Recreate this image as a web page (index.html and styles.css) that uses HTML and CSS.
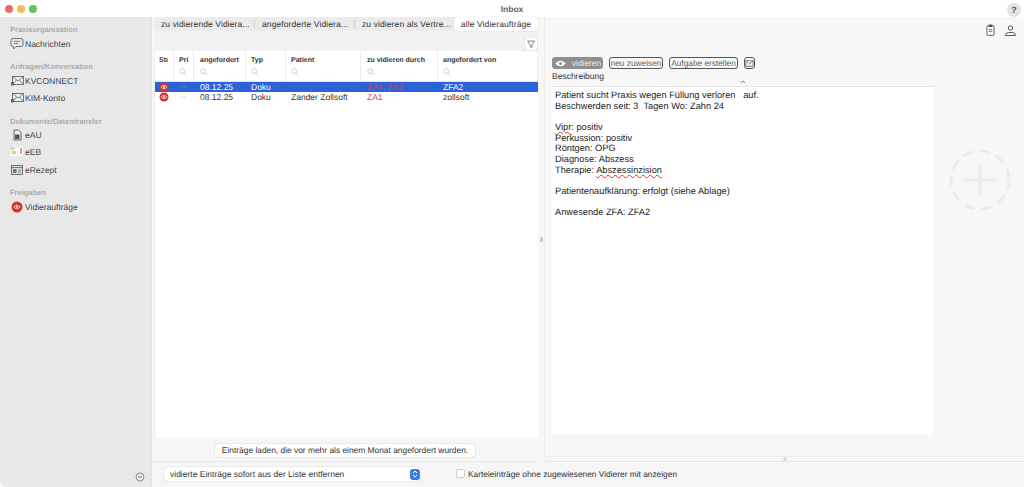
FILE: index.html
```html
<!DOCTYPE html>
<html lang="de">
<head>
<meta charset="utf-8">
<title>Inbox</title>
<link rel="stylesheet" href="styles.css">
</head>
<body>
<div class="window">
  <header class="titlebar">
    <div class="lights"><i class="light red"></i><i class="light yellow"></i><i class="light green"></i></div>
    <div class="title">Inbox</div>
    <div class="help">?</div>
  </header>
  <div class="body">
    <aside class="sidebar">
      <div class="group-title first">Praxisorganisation</div>
      <div class="nav-item"><svg class="nav-icon" viewBox="0 0 14 14"><path d="M3 1.500h8a2 2 0 0 1 2 2v4a2 2 0 0 1-2 2H6L3.500 12V9.500H3a2 2 0 0 1-2-2v-4a2 2 0 0 1 2-2z" fill="none" stroke="#666" stroke-width=".9"/><path d="M4 4.400h6M4 6.600h4" stroke="#666" stroke-width=".8"/></svg>Nachrichten</div>
      <div class="group-title">Anfragen/Konversation</div>
      <div class="nav-item"><svg class="nav-icon" viewBox="0 0 14 14"><rect x="2.500" y="2.500" width="11" height="8" fill="#eee" stroke="#666" stroke-width=".9"/><path d="M2.500 2.500l5.500 4.500 5.500-4.500M2.500 10.500l4-4.500M13.500 10.500l-4-4.500" fill="none" stroke="#666" stroke-width=".8"/><rect x="1" y="8" width="3" height="3.500" fill="#666"/></svg>KVCONNECT</div>
      <div class="nav-item"><svg class="nav-icon" viewBox="0 0 14 14"><rect x="2.500" y="2.500" width="11" height="8" fill="#eee" stroke="#666" stroke-width=".9"/><path d="M2.500 2.500l5.500 4.500 5.500-4.500M2.500 10.500l4-4.500M13.500 10.500l-4-4.500" fill="none" stroke="#666" stroke-width=".8"/><rect x="1" y="8" width="3" height="3.500" fill="#666"/></svg>KIM-Konto</div>
      <div class="group-title">Dokumente/Datentransfer</div>
      <div class="nav-item"><svg class="nav-icon" viewBox="0 0 14 14"><path d="M4 2h4.500L11 4.500V12H4z" fill="#eee" stroke="#555" stroke-width=".9"/><rect x="5" y="6.500" width="4.500" height="4.500" fill="#555"/></svg>eAU</div>
      <div class="nav-item"><svg class="nav-icon" viewBox="0 0 14 14"><rect x="1" y="2.500" width="12" height="9" fill="#f8f8f8"/><rect x="1" y="2.500" width="3" height="2" fill="#a9cda9"/><rect x="2" y="6" width="4" height="3" fill="#eccd77"/><rect x="10" y="3" width="2" height="6" fill="#cfa9a9"/></svg>eEB</div>
      <div class="nav-item"><svg class="nav-icon" viewBox="0 0 14 14"><rect x="1.500" y="2.500" width="11" height="9" fill="#ddd" stroke="#666" stroke-width=".9"/><path d="M1.500 4.500h11" stroke="#666" stroke-width=".8"/><rect x="3" y="6" width="3.500" height="4" fill="#777"/><path d="M8 7h3M8 9h3" stroke="#777" stroke-width=".8"/></svg>eRezept</div>
      <div class="group-title">Freigaben</div>
      <div class="nav-item"><svg class="nav-icon" viewBox="0 0 14 14"><circle cx="7" cy="7" r="5.500" fill="#d5322c"/><path d="M3.800 7q3.200-3.600 6.400 0q-3.200 3.600-6.400 0z" fill="none" stroke="#fff" stroke-width=".8"/><circle cx="7" cy="7" r="1" fill="#fff"/></svg>Vidieraufträge</div>
      <div class="sidebar-foot"><svg class="collapse" viewBox="0 0 10 10"><circle cx="5" cy="5" r="4" fill="none" stroke="#777" stroke-width=".8"/><path d="M3 5h4" stroke="#777" stroke-width=".8"/></svg></div>
    </aside>

    <main class="center">
      <nav class="tabs">
        <div class="tab">zu vidierende Vidiera...</div>
        <div class="tab sep">angeforderte Vidiera...</div>
        <div class="tab sep">zu vidieren als Vertre...</div>
        <div class="tab active">alle Vidieraufträge</div>
      </nav>
      <div class="filter-row">
        <div class="filter-btn"><svg viewBox="0 0 10 10" class="filter-icon"><path d="M1.500 2h7L6 5.500V8.500L4 7.500V5.500z" fill="none" stroke="#666" stroke-width=".8"/></svg></div>
      </div>
      <div class="table">
        <div class="row head">
          <div class="cell c1"><b>Stı</b></div>
          <div class="cell c2"><b>Pri</b><svg class="search" viewBox="0 0 10 10"><circle cx="4" cy="4" r="3" fill="none" stroke="#b5b5b5" stroke-width=".8"/><path d="M6.200 6.200L9 9" stroke="#b5b5b5" stroke-width=".8"/></svg></div>
          <div class="cell c3"><b>angefordert</b><svg class="search" viewBox="0 0 10 10"><circle cx="4" cy="4" r="3" fill="none" stroke="#b5b5b5" stroke-width=".8"/><path d="M6.200 6.200L9 9" stroke="#b5b5b5" stroke-width=".8"/></svg></div>
          <div class="cell c4"><b>Typ</b><svg class="search" viewBox="0 0 10 10"><circle cx="4" cy="4" r="3" fill="none" stroke="#b5b5b5" stroke-width=".8"/><path d="M6.200 6.200L9 9" stroke="#b5b5b5" stroke-width=".8"/></svg></div>
          <div class="cell c5"><b>Patient</b><svg class="search" viewBox="0 0 10 10"><circle cx="4" cy="4" r="3" fill="none" stroke="#b5b5b5" stroke-width=".8"/><path d="M6.200 6.200L9 9" stroke="#b5b5b5" stroke-width=".8"/></svg></div>
          <div class="cell c6"><b>zu vidieren durch</b><svg class="search" viewBox="0 0 10 10"><circle cx="4" cy="4" r="3" fill="none" stroke="#b5b5b5" stroke-width=".8"/><path d="M6.200 6.200L9 9" stroke="#b5b5b5" stroke-width=".8"/></svg></div>
          <div class="cell c7"><b>angefordert von</b><svg class="search" viewBox="0 0 10 10"><circle cx="4" cy="4" r="3" fill="none" stroke="#b5b5b5" stroke-width=".8"/><path d="M6.200 6.200L9 9" stroke="#b5b5b5" stroke-width=".8"/></svg></div>
        </div>
        <div class="row data selected">
          <div class="cell c1"><svg class="eye" viewBox="0 0 10 10"><circle cx="5" cy="5" r="4.500" fill="#d5322c"/><path d="M2 5q3-3.400 6 0q-3 3.400-6 0z" fill="none" stroke="#fff" stroke-width=".7"/><circle cx="5" cy="5" r=".9" fill="#fff"/></svg></div>
          <div class="cell c2"><svg class="prio" viewBox="0 0 10 6"><path d="M1 5l4-3.500L9 5" fill="none" stroke="#5c9a6a" stroke-width="1.300"/></svg></div>
          <div class="cell c3">08.12.25</div>
          <div class="cell c4">Doku</div>
          <div class="cell c5"></div>
          <div class="cell c6 danger">ZA1, ZA2</div>
          <div class="cell c7">ZFA2</div>
        </div>
        <div class="row data">
          <div class="cell c1"><svg class="eye" viewBox="0 0 10 10"><circle cx="5" cy="5" r="4.500" fill="#d5322c"/><path d="M2 5q3-3.400 6 0q-3 3.400-6 0z" fill="none" stroke="#fff" stroke-width=".7"/><circle cx="5" cy="5" r=".9" fill="#fff"/></svg></div>
          <div class="cell c2"><svg class="prio" viewBox="0 0 10 6"><path d="M1 5l4-3.500L9 5" fill="none" stroke="#b6d8a8" stroke-width="1.300"/></svg></div>
          <div class="cell c3">08.12.25</div>
          <div class="cell c4">Doku</div>
          <div class="cell c5">Zander Zollsoft</div>
          <div class="cell c6 danger">ZA1</div>
          <div class="cell c7">zollsoft</div>
        </div>
      </div>
      <div class="load-row"><button class="load-btn">Einträge laden, die vor mehr als einem Monat angefordert wurden.</button></div>
    </main>

    <div class="splitter"><i></i></div>

    <section class="detail">
      <div class="detail-top">
        <svg class="top-icon clip" viewBox="0 0 10 13"><rect x="1" y="2" width="8" height="10.500" rx="1" fill="none" stroke="#444" stroke-width=".9"/><rect x="3" y=".5" width="4" height="2.500" fill="#444"/><path d="M3 6h4M3 8h4" stroke="#444" stroke-width=".8"/></svg>
        <svg class="top-icon person" viewBox="0 0 11 11"><circle cx="5.500" cy="3" r="2.200" fill="none" stroke="#444" stroke-width=".9"/><path d="M.5 10.500q0-3 3-3h4q3 0 3 3z" fill="none" stroke="#444" stroke-width=".9"/></svg>
      </div>
      <div class="actions">
        <div class="act primary"><svg class="act-eye" viewBox="0 0 14 10"><path d="M1 5q6-6 12 0q-6 6-12 0z" fill="#fff"/><circle cx="7" cy="5" r="1.700" fill="#8d8d8d"/></svg>vidieren</div>
        <div class="act reassign">neu zuweisen</div>
        <div class="act task">Aufgabe erstellen</div>
        <div class="act mail"><svg viewBox="0 0 10 10" class="mail-icon"><rect x="1" y="2" width="8" height="6" fill="none" stroke="#555" stroke-width=".8"/><path d="M1 2l4 3.500L9 2" fill="none" stroke="#555" stroke-width=".8"/></svg></div>
      </div>
      <div class="desc-label">Beschreibung</div>
      <div class="caret-row"><svg class="caret" viewBox="0 0 8 5"><path d="M1 4l3-3 3 3" fill="none" stroke="#666"/></svg></div>
      <div class="editor-row">
        <div class="editor">
          <p>Patient sucht Praxis wegen Füllung verloren &nbsp; auf.<br>Beschwerden seit: 3 &nbsp;Tagen Wo: Zahn 24</p>
          <p><u>Vipr</u>: positiv<br>Perkussion: positiv<br>Röntgen: OPG<br>Diagnose: Abszess<br>Therapie: <u>Abszessinzision</u></p>
          <p>Patientenaufklärung: erfolgt (siehe Ablage)</p>
          <p>Anwesende ZFA: ZFA2</p>
        </div>
        <div class="add-zone"><svg class="add" viewBox="0 0 62 62"><circle cx="31" cy="31" r="29" fill="none" stroke="#ebebeb" stroke-width="3" stroke-dasharray="10 7"/><path d="M31 16v30M16 31h30" stroke="#ebebeb" stroke-width="3"/></svg></div>
      </div>
      <div class="grip"><i></i></div>
    </section>
  </div>
  <footer class="footer">
    <div class="foot-spacer"></div>
    <div class="select">vidierte Einträge sofort aus der Liste entfernen<span class="stepper"><svg viewBox="0 0 8 10"><path d="M2 4l2-2 2 2M2 6l2 2 2-2" fill="none" stroke="#fff" stroke-width="1"/></svg></span></div>
    <label class="check"><i class="box"></i>Karteieinträge ohne zugewiesenen Vidierer mit anzeigen</label>
  </footer>
</div>
</body>
</html>
```

FILE: styles.css
```css
* { box-sizing: border-box; }
html, body { margin: 0; height: 100%; }
body {
  background: #fff;
  font-family: "Liberation Sans", Arial, sans-serif;
  font-size: 8.500px;
  color: #333;
  overflow: hidden;
  text-rendering: geometricPrecision;
}
.window { position: relative; width: 1024px; height: 487px; display: flex; flex-direction: column; background: #f7f7f7; }

.titlebar { flex: 0 0 17px; background: #fff; display: flex; align-items: center; justify-content: space-between; padding: 0 3px 0 5px; }
.lights { display: flex; gap: 4px; width: 100px; }
.light { width: 8px; height: 8px; border-radius: 50%; display: block; }
.red { background: #ee6a5f; }
.yellow { background: #f5bd4f; }
.green { background: #61c454; }
.title { font-size: 8.500px; font-weight: bold; color: #666; margin-left: -2px; }
.help { width: 14px; height: 14px; margin-top: 2px; border-radius: 50%; background: #e3e3e3; color: #555; font-size: 9px; font-weight: bold; display: flex; align-items: center; justify-content: center; margin-left: 86px; }

.body { flex: 1; display: flex; min-height: 0; }

.sidebar { flex: 0 0 152px; background: #e8e8e8; position: relative; padding-left: 10px; border-right: 1px solid #e2e2e2; border-bottom-left-radius: 8px; margin-bottom: -25px; z-index: 1; }
.group-title { color: #ababab; font-size: 7.500px; font-weight: bold; margin-top: 10px; height: 10px; line-height: 10px; }
.group-title.first { margin-top: 8px; }
.nav-item { display: flex; align-items: center; height: 17.200px; font-size: 8.500px; color: #444; }
.nav-icon { width: 14px; height: 14px; flex: none; margin-right: 1px; }
.sidebar-foot { position: absolute; right: 6px; bottom: 5px; line-height: 0; }
.collapse { width: 10px; height: 10px; }

.center { flex: 0 0 386px; display: flex; flex-direction: column; min-width: 0; padding-left: 2px; }
.tabs { display: flex; align-items: center; height: 14px; background: #ebebeb; border-radius: 4px; }
.tab { flex: none; height: 14px; line-height: 14px; font-size: 8.500px; color: #333; padding-left: 8px; letter-spacing: .1px; position: relative; white-space: nowrap; }
.tab:nth-child(1) { width: 99px; padding-left: 7px; }
.tab:nth-child(2) { width: 100px; padding-left: 9px; }
.tab:nth-child(3) { width: 101px; padding-left: 9px; }
.tab.active { width: 84px; background: #fff; border-radius: 4px; text-align: center; padding: 0; box-shadow: 0 0 1px #bbb; }
.tab.sep::before { content: ""; position: absolute; left: 1px; top: 3px; bottom: 3px; width: 1px; background: #d0d0d0; }

.filter-row { height: 20px; display: flex; justify-content: flex-end; align-items: center; background: #f2f2f2; padding-right: 1px; }
.filter-btn { width: 12px; height: 12px; background: #fff; border-radius: 2px; box-shadow: 0 0 1px #999; display: flex; align-items: center; justify-content: center; margin-top: 5px; }
.filter-icon { width: 10px; height: 10px; }

.table { flex: 1; background: #fff; font-size: 8.500px; border-left: 1px solid #ececec; min-height: 0; }
.row { display: flex; }
.head { height: 31px; border-bottom: 1px solid #e4e4e4; }
.head .cell { border-right: 1px solid #ececec; padding-top: 5px; display: flex; flex-direction: column; }
.head b { font-size: 7px; color: #333; line-height: 9px; white-space: nowrap; overflow: hidden; }
.search { width: 8px; height: 8px; margin-top: 3px; display: block; flex: none; }
.data { height: 10px; line-height: 10px; color: #333; }
.data .cell { white-space: nowrap; overflow: hidden; }
.selected { background: #2b62d8; color: #fff; }
.cell { padding-left: 5px; flex: none; }
.c1 { width: 19px; padding-left: 4px; }
.c2 { width: 20px; padding-left: 5px; }
.c3 { width: 52px; padding-left: 6px; }
.c4 { width: 40px; }
.c5 { width: 75px; }
.c6 { width: 77px; padding-left: 6px; }
.c7 { width: 100px; }
.data .danger { color: #d9424a; }
.eye { width: 10px; height: 10px; display: block; }
.prio { width: 7px; height: 4px; display: block; margin: 3px 0 0 1px; }

.load-row { flex: 0 0 24px; display: flex; align-items: flex-start; justify-content: center; padding-top: 6px; margin-left: -2px; border-bottom: 1px solid #e8e8e8; background: #f6f6f6; }
.load-btn { all: unset; width: 260px; height: 13px; text-align: center; font: 8.400px/13px "Liberation Sans", Arial, sans-serif; color: #333; background: #fff; border-radius: 3px; box-shadow: 0 0 1px #888; white-space: nowrap; }

.splitter { flex: 0 0 7px; display: flex; align-items: center; justify-content: center; border-right: 1px solid #ececec; }
.splitter i { width: 3px; height: 5px; background: #cfcfcf; display: block; }

.detail { flex: 1; display: flex; flex-direction: column; min-width: 0; position: relative; border-bottom: 1px solid #e4e4e4; }
.detail-top { height: 40px; display: flex; justify-content: flex-end; align-items: flex-start; gap: 10px; padding: 7px 8px 0 0; }
.top-icon { flex: none; }
.clip { width: 9px; height: 12px; }
.person { width: 11px; height: 11px; margin-top: 1px; }
.actions { display: flex; align-items: center; gap: 6px; padding-left: 7px; height: 12px; }
.act { height: 12px; border: 1px solid #555; border-radius: 3px; font-size: 8.300px; color: #666; white-space: nowrap; display: flex; align-items: center; justify-content: center; flex: none; }
.act.primary { width: 51px; background: #8f8f8f; border-color: #8f8f8f; color: #eee; gap: 5px; }
.reassign { width: 54px; }
.task { width: 69px; }
.act-eye { width: 13px; height: 9px; }
.act.mail { width: 11px; }
.mail-icon { width: 9px; height: 9px; }
.desc-label { padding-left: 7px; font-size: 8.500px; line-height: 10px; height: 10px; margin-top: 2px; color: #333; }
.caret-row { height: 5px; position: relative; }
.caret { width: 6px; height: 4px; position: absolute; top: -1px; left: 195px; }
.editor-row { flex: 1; display: flex; min-height: 0; padding-left: 7px; margin-bottom: 26px; }
.editor { flex: 0 0 382px; background: #fff; border-top: 1px solid #e4e4e4; padding: 3px 0 0 3px; font-size: 9.250px; line-height: 10.650px; color: #222; }
.editor p { margin: 0 0 10.650px; }
.editor u { text-decoration: underline wavy #d33 .5px; text-underline-offset: 1px; }
.add-zone { flex: 1; padding: 63px 0 0 15px; }
.add { width: 62px; height: 62px; display: block; }
.grip { position: absolute; left: 0; right: 0; bottom: 0; height: 5px; border-top: 1px solid #ececec; display: flex; justify-content: center; }
.grip i { width: 4px; height: 4px; background: #ddd; border-radius: 50%; display: block; }

.footer { flex: 0 0 25px; display: flex; align-items: center; background: #f6f6f6; padding-bottom: 2px; }
.foot-spacer { flex: 0 0 164px; }
.select { width: 257px; height: 14px; background: #fff; border-radius: 4px; box-shadow: 0 0 1px #999; font-size: 8.500px; line-height: 14px; padding-left: 6px; position: relative; color: #333; }
.stepper { position: absolute; right: 1px; top: 2px; width: 10px; height: 11px; border-radius: 3px; background: #3d7ee6; display: flex; align-items: center; justify-content: center; }
.stepper svg { width: 8px; height: 10px; }
.check { display: flex; align-items: center; margin-left: 35px; font-size: 8.350px; color: #333; gap: 3px; }
.box { width: 9px; height: 9px; background: #fff; border: 1px solid #ccc; border-radius: 2px; display: block; }
```
